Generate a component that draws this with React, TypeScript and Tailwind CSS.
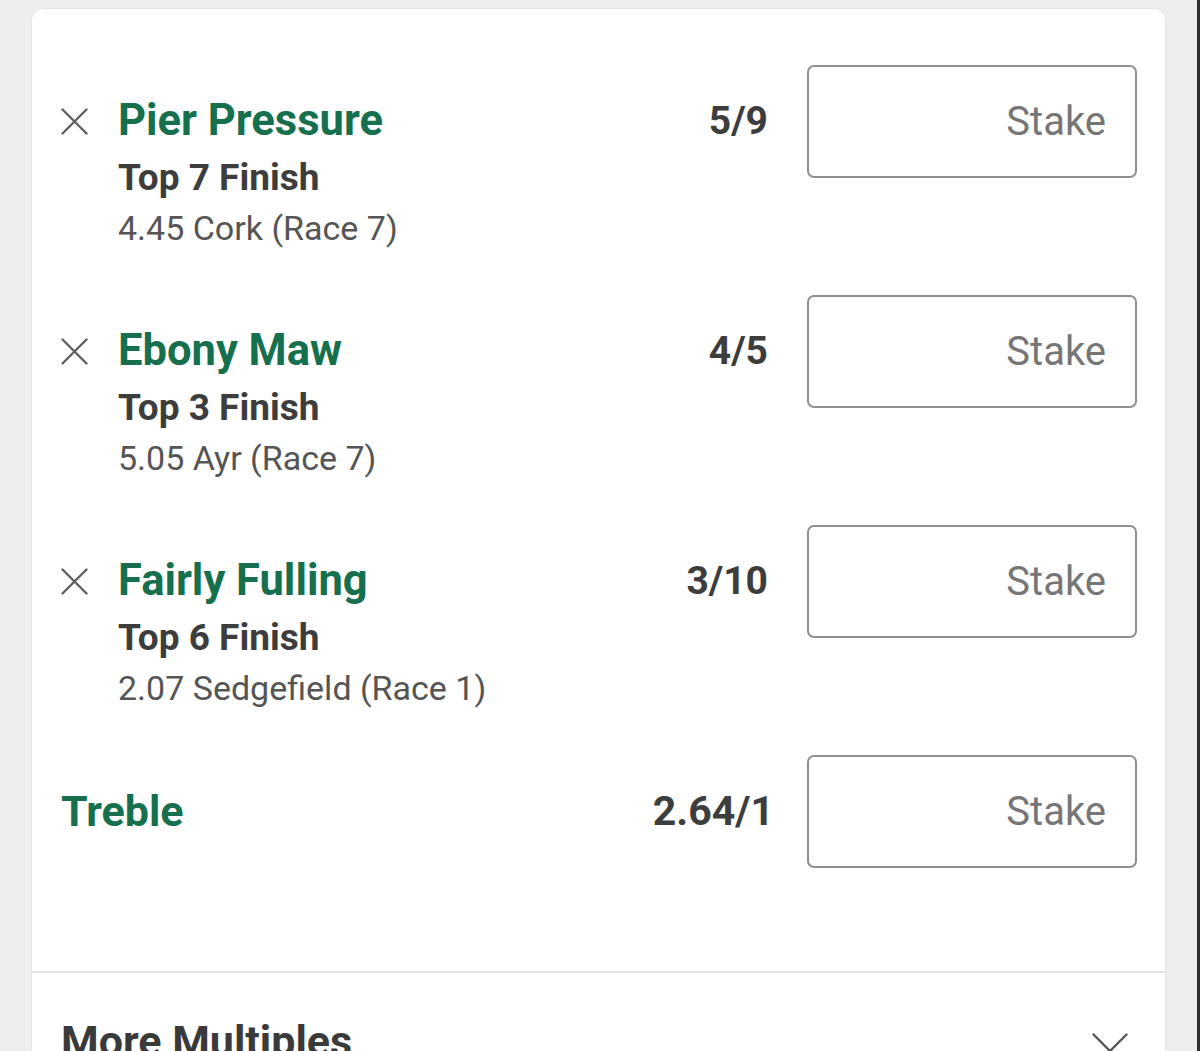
import React from 'react';

interface Selection {
  id: number;
  runner: string;
  market: string;
  race: string;
  odds: string;
}

const selections: Selection[] = [
  { id: 1, runner: 'Pier Pressure', market: 'Top 7 Finish', race: '4.45 Cork (Race 7)', odds: '5/9' },
  { id: 2, runner: 'Ebony Maw', market: 'Top 3 Finish', race: '5.05 Ayr (Race 7)', odds: '4/5' },
  { id: 3, runner: 'Fairly Fulling', market: 'Top 6 Finish', race: '2.07 Sedgefield (Race 1)', odds: '3/10' },
];

const RemoveIcon = () => (
  <svg width="27" height="27" viewBox="0 0 27 27" className="text-[#5f5f5f]">
    <path d="M1.5 1.5 L25.5 25.5 M25.5 1.5 L1.5 25.5" stroke="currentColor" strokeWidth="2.4" strokeLinecap="round" fill="none" />
  </svg>
);

const StakeBox = () => (
  <div className="w-[330px] h-[113px] shrink-0 rounded-[7px] border-2 border-[#8f8f8f] flex items-center justify-end pr-[29px]">
    <span className="text-[40px] text-[#767676] leading-none">Stake</span>
  </div>
);

const App: React.FC = () => {
  return (
    <div className="h-[1051px] overflow-hidden bg-[#eeeeee] flex font-['Roboto','Liberation_Sans',sans-serif]">
      <div className="flex-1 pt-[8px] pl-[31px] pr-[31px]">
        <div className="bg-white rounded-t-[12px] border border-[#e4e4e4] h-[1100px]">
          {/* Bet slip selections */}
          <div className="pt-[56px] pl-[29px] pr-[28px]">
            {selections.map((s) => (
              <div key={s.id} className="flex items-start pb-[47px]">
                <div className="w-[57px] shrink-0 mt-[28px] h-[56px] flex items-center">
                  <RemoveIcon />
                </div>
                <div className="flex-1 min-w-0">
                  <div className="mt-[28px] text-[43.5px] leading-[56px] font-bold text-[#16704e]">{s.runner}</div>
                  <div className="mt-[5px] text-[37px] leading-[48px] font-bold text-[#3d3d3d]">{s.market}</div>
                  <div className="mt-[6px] text-[34px] leading-[40px] text-[#555555]">{s.race}</div>
                </div>
                <div className="mr-[39px] text-[39px] leading-[113px] font-bold text-[#3d3d3d]">{s.odds}</div>
                <StakeBox />
              </div>
            ))}

            {/* Treble */}
            <div className="flex items-start pb-[103px]">
              <div className="flex-1 text-[43px] leading-[113px] font-bold text-[#16704e]">Treble</div>
              <div className="mr-[33px] text-[41px] leading-[113px] font-bold text-[#3d3d3d]">2.64/1</div>
              <StakeBox />
            </div>
          </div>

          <div className="h-[2px] bg-[#e3e3e3]" />

          {/* More multiples toggle */}
          <div className="flex items-start justify-between pt-[40px] pl-[29px] pr-[37px]">
            <div className="text-[43px] leading-[56px] font-bold text-[#3a3a3a]">More Multiples</div>
            <svg width="36" height="22" viewBox="0 0 36 22" className="mt-[20px] text-[#555555]">
              <path d="M1.5 1.5 L18 18 L34.5 1.5" stroke="currentColor" strokeWidth="2.4" strokeLinecap="round" strokeLinejoin="round" fill="none" />
            </svg>
          </div>
        </div>
      </div>
      <div className="w-[3px] bg-[#2f2f2f]" />
    </div>
  );
};

export default App;
